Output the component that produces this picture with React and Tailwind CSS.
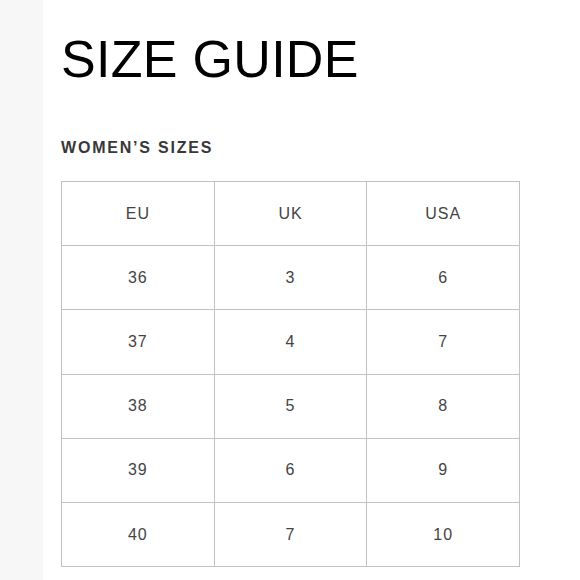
import React from 'react'

const rows = [
  ['EU', 'UK', 'USA'],
  ['36', '3', '6'],
  ['37', '4', '7'],
  ['38', '5', '8'],
  ['39', '6', '9'],
  ['40', '7', '10'],
]

export default function App() {
  return (
    <div className="flex w-[580px] h-[580px] bg-white overflow-hidden" style={{ fontFamily: '"Liberation Sans", Arial, sans-serif' }}>
      <div className="w-[43px] shrink-0 bg-[#f7f7f7]" />
      <div className="flex-1 pl-[18px] pt-[33px] bg-white">
        <h1 className="text-[52px] leading-none text-black font-normal tracking-[0.3px]">SIZE GUIDE</h1>
        <h2 className="mt-[55px] text-[16px] leading-4 font-bold tracking-[1.8px] text-[#383838]">WOMEN’S SIZES</h2>
        <div className="mt-[25px] w-[459px] grid grid-cols-3 border-t border-l border-[#c2c2c2]">
          {rows.flat().map((cell, i) => (
            <div
              key={i}
              className="h-[64.2px] flex items-center justify-center border-r border-b border-[#c2c2c2] text-[16px] tracking-[1px] text-[#444]"
            >
              {cell}
            </div>
          ))}
        </div>
      </div>
    </div>
  )
}
